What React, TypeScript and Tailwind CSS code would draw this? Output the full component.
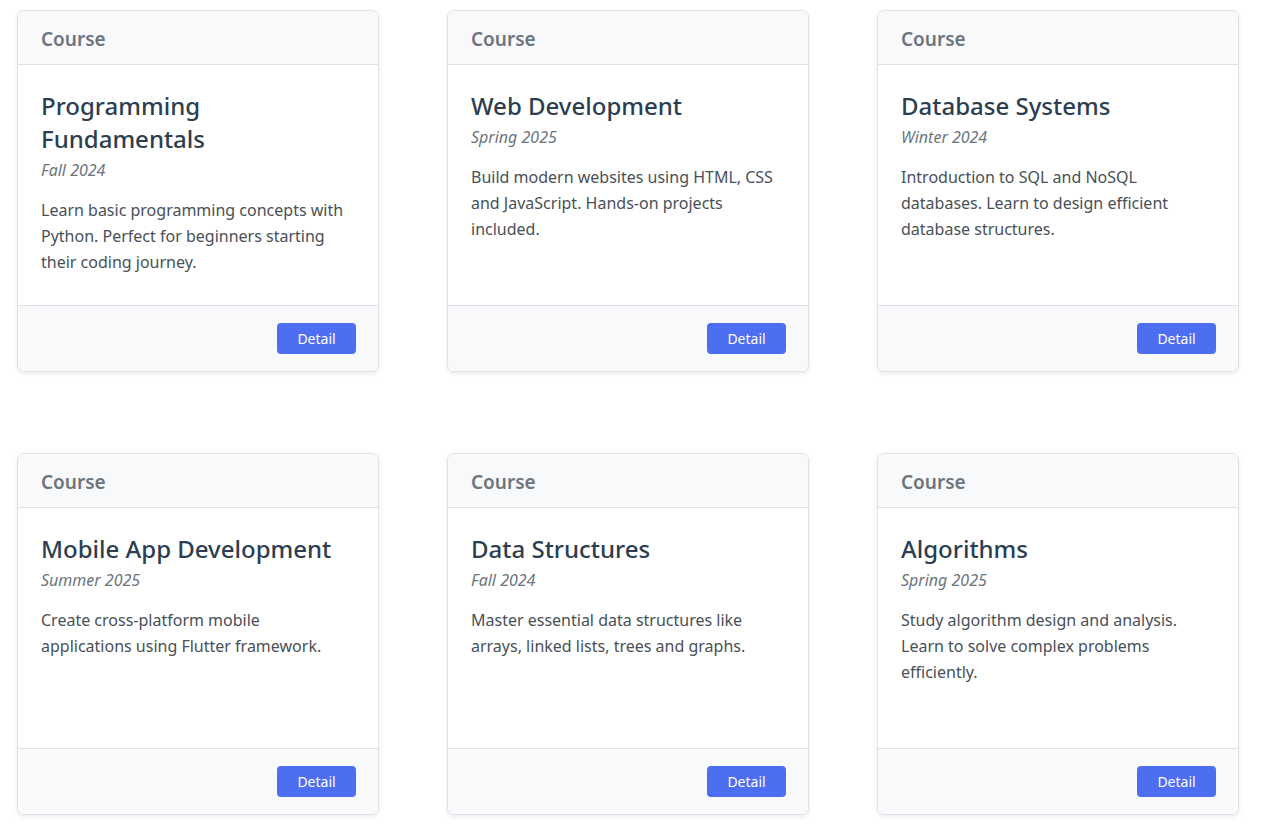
import React from 'react';

interface Course {
  title: string;
  term: string;
  description: string;
}

const COURSES: Course[] = [
  {
    title: 'Programming Fundamentals',
    term: 'Fall 2024',
    description: 'Learn basic programming concepts with Python. Perfect for beginners starting their coding journey.',
  },
  {
    title: 'Web Development',
    term: 'Spring 2025',
    description: 'Build modern websites using HTML, CSS and JavaScript. Hands-on projects included.',
  },
  {
    title: 'Database Systems',
    term: 'Winter 2024',
    description: 'Introduction to SQL and NoSQL databases. Learn to design efficient database structures.',
  },
  {
    title: 'Mobile App Development',
    term: 'Summer 2025',
    description: 'Create cross-platform mobile applications using Flutter framework.',
  },
  {
    title: 'Data Structures',
    term: 'Fall 2024',
    description: 'Master essential data structures like arrays, linked lists, trees and graphs.',
  },
  {
    title: 'Algorithms',
    term: 'Spring 2025',
    description: 'Study algorithm design and analysis. Learn to solve complex problems efficiently.',
  },
];

const CourseCard: React.FC<{ course: Course }> = ({ course }) => {
  return (
    <div className="flex h-[362px] flex-col overflow-hidden rounded-[7px] border border-[#dee2e6] bg-white shadow-[0_2px_5px_rgba(0,0,0,0.08)]">
      <div className="flex h-[54px] items-center border-b border-[#dee2e6] bg-[#f8f9fa] pl-[23px] pt-[3px]">
        <span className="text-[19px] font-semibold text-[#6c757d]">Course</span>
      </div>
      <div className="flex-1 pl-[23px] pr-6 pt-[24px]">
        <h2 className="text-[24px] font-medium leading-[33px] text-[#2c3e50]">{course.title}</h2>
        <p className="mt-[5px] text-[16px] italic leading-[20px] text-[#6c757d]">{course.term}</p>
        <p className="mt-[17px] text-[16px] leading-[26px] text-[#495057]">{course.description}</p>
      </div>
      <div className="flex h-[66px] items-center justify-end border-t border-[#dee2e6] bg-[#f8f9fa] px-[22px]">
        <button className="h-[31px] w-[79px] rounded-[4px] bg-[#4e6ef2] text-[14px] text-white">
          Detail
        </button>
      </div>
    </div>
  );
};

export default function App() {
  return (
    <div className="min-h-screen bg-white font-['Noto_Sans',_'Open_Sans',_sans-serif]">
      <div className="grid grid-cols-[362px_362px_362px] gap-x-[68px] gap-y-[81px] pl-[17px] pt-[10px]">
        {COURSES.map((course) => (
          <CourseCard key={course.title} course={course} />
        ))}
      </div>
    </div>
  );
}
